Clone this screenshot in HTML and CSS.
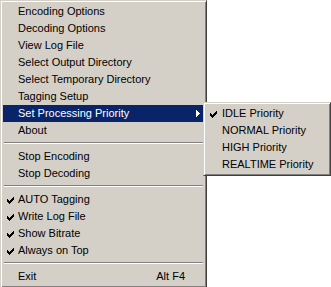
FILE: index.html
```html
<!DOCTYPE html>
<html lang="en">
<head>
  <meta charset="UTF-8">
  <meta name="viewport" content="width=device-width, initial-scale=1.0">
  <title>menu</title>
  <link rel="stylesheet" href="styles.css">
</head>
<body>
  <div class="desk">
    <div class="menu main">
      <div class="item">Encoding Options</div>
      <div class="item">Decoding Options</div>
      <div class="item">View Log File</div>
      <div class="item">Select Output Directory</div>
      <div class="item">Select Temporary Directory</div>
      <div class="item">Tagging Setup</div>
      <div class="item active">
        <span>Set Processing Priority</span>
        <svg class="arrow" width="4" height="7" viewBox="0 0 4 7" shape-rendering="crispEdges">
          <rect x="0" y="0" width="1" height="7"/>
          <rect x="1" y="1" width="1" height="5"/>
          <rect x="2" y="2" width="1" height="3"/>
          <rect x="3" y="3" width="1" height="1"/>
        </svg>
      </div>
      <div class="item">About</div>
      <div class="sep"></div>
      <div class="item">Stop Encoding</div>
      <div class="item">Stop Decoding</div>
      <div class="sep"></div>
      <div class="item checked">AUTO Tagging</div>
      <div class="item checked">Write Log File</div>
      <div class="item checked">Show Bitrate</div>
      <div class="item checked">Always on Top</div>
      <div class="sep"></div>
      <div class="item">
        <span>Exit</span>
        <span class="key">Alt F4</span>
      </div>
    </div>

    <div class="menu sub">
      <div class="item checked">IDLE Priority</div>
      <div class="item">NORMAL Priority</div>
      <div class="item">HIGH Priority</div>
      <div class="item">REALTIME Priority</div>
    </div>
  </div>

  <svg width="0" height="0" class="defs">
    <defs>
      <g id="tick" shape-rendering="crispEdges">
        <rect x="6" y="0" width="1" height="1"/>
        <rect x="5" y="1" width="2" height="1"/>
        <rect x="0" y="2" width="1" height="1"/>
        <rect x="4" y="2" width="3" height="1"/>
        <rect x="0" y="3" width="2" height="1"/>
        <rect x="3" y="3" width="3" height="1"/>
        <rect x="0" y="4" width="5" height="1"/>
        <rect x="1" y="5" width="3" height="1"/>
        <rect x="2" y="6" width="1" height="1"/>
      </g>
    </defs>
  </svg>

  <script>
    document.querySelectorAll('.item.checked').forEach(el => {
      el.insertAdjacentHTML('afterbegin',
        '<svg class="tick" width="7" height="7" viewBox="0 0 7 7"><use href="#tick"/></svg>');
    });
  </script>
</body>
</html>
```

FILE: styles.css
```css
body {
    margin: 0;
    background: #ffffff;
    font-family: "Liberation Sans", Arial, sans-serif;
    font-size: 11px;
    color: #000;
}

.defs {
    position: absolute;
}

.desk {
    position: relative;
    width: 331px;
    height: 287px;
    overflow: hidden;
}

.menu {
    box-sizing: border-box;
    background: #d4d0c8;
    border: 1px solid;
    border-color: #d4d0c8 #404040 #404040 #d4d0c8;
    box-shadow: inset 1px 1px #ffffff, inset -1px -1px #808080;
    padding: 2px;
}

.main {
    width: 207px;
}

.sub {
    position: absolute;
    left: 203px;
    top: 102px;
    width: 128px;
}

.item {
    position: relative;
    height: 17px;
    line-height: 17px;
    padding: 0 19px 0 15px;
    display: flex;
    justify-content: space-between;
    align-items: center;
    white-space: nowrap;
}

.sub .item {
    padding-left: 16px;
}

.item.active {
    background: #0a246a;
    color: #fff;
}

.arrow {
    position: absolute;
    right: 4px;
    top: 5px;
    fill: #fff;
}

.tick {
    position: absolute;
    left: 4px;
    top: 6px;
    fill: #000;
}

.sep {
    height: 9px;
    position: relative;
}
.sep::before {
    content: "";
    position: absolute;
    left: 1px;
    right: 1px;
    top: 3px;
    height: 1px;
    background: #808080;
    border-bottom: 1px solid #ffffff;
}
```
